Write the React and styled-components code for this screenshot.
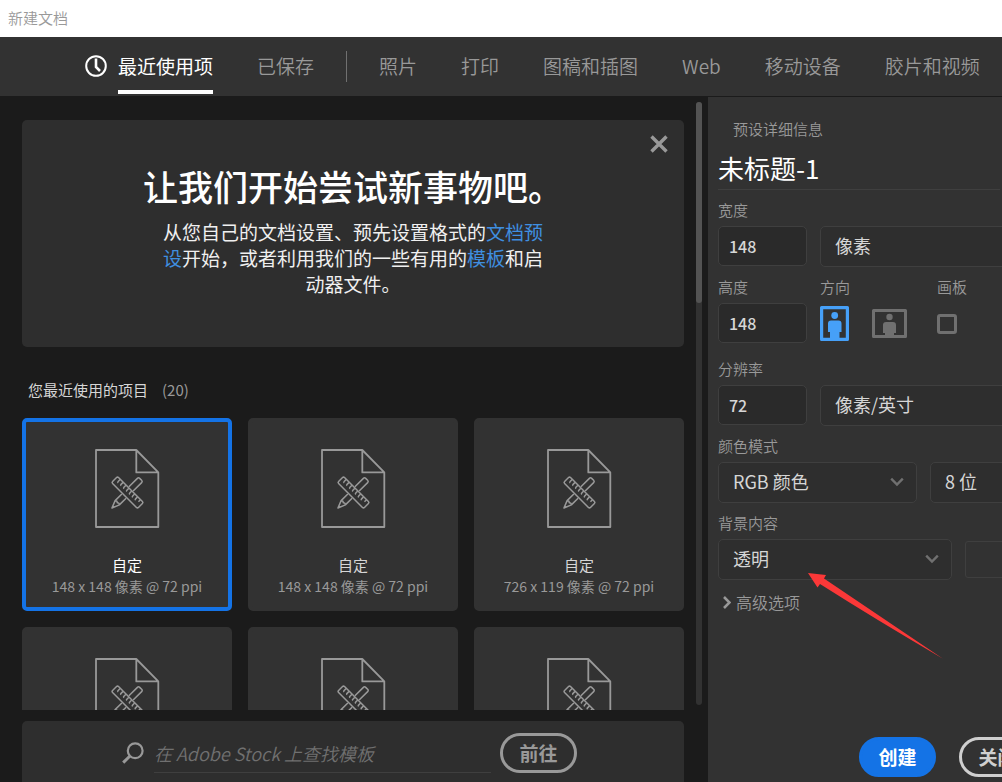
import React, { useState } from 'react'
import styled, { createGlobalStyle, css, ThemeProvider } from 'styled-components'

const theme = {
  dark: '#1b1b1b',
  panel: '#323232',
  inset: '#2e2e2e',
  field: '#2a2a2a',
  line: '#3f3f3f',
  muted: '#999999',
  dim: '#707070',
  text: '#d6d6d6',
  blue: '#1473e6',
  link: '#3f8fe0',
  radius: '5px'
}

const GlobalStyle = createGlobalStyle`
  *, *::before, *::after {
    box-sizing: border-box;
  }
  body {
    margin: 0;
    font-family: 'Noto Sans CJK SC', 'Noto Sans', sans-serif;
    font-size: 15px;
    background: ${theme.dark};
  }
  button, input, select {
    margin: 0;
    padding: 0;
    border: 0;
    background: none;
    color: inherit;
    font: inherit;
    outline: none;
  }
  svg {
    display: block;
    flex: none;
  }
`

const Dialog = styled.div`
  display: flex;
  flex-direction: column;
  height: 100vh;
  overflow: hidden;
  background: ${props => props.theme.dark};
  color: ${props => props.theme.text};
`

const TitleBar = styled.header`
  flex: none;
  padding: 0 8px;
  line-height: 35px;
  border-bottom: 2px solid #fff;
  background: #fff;
  color: ${props => props.theme.muted};
  font-weight: 350;
`

const Tabs = styled.nav`
  display: flex;
  flex: none;
  align-items: center;
  gap: 44px;
  height: 60px;
  padding: 0 0 2px 85px;
  background: ${props => props.theme.panel};
  border-bottom: 1px solid ${props => props.theme.dark};
  overflow: hidden;
`

const Tab = styled.button`
  display: flex;
  flex: none;
  align-items: center;
  gap: 11px;
  height: 57px;
  font-size: 19px;
  font-weight: ${props => (props.$active ? 400 : 350)};
  white-space: nowrap;
  color: ${props => (props.$active ? '#fff' : props.theme.muted)};
  span {
    line-height: 49px;
    border-top: 4px solid transparent;
    border-bottom: 4px solid ${props => (props.$active ? '#fff' : 'transparent')};
  }
`

const Divider = styled.i`
  flex: none;
  width: 1px;
  height: 31px;
  margin: 2px -12px 0;
  background: ${props => props.theme.dim};
`

const Body = styled.div`
  display: flex;
  flex: 1;
  min-height: 0;
`

const Main = styled.main`
  display: flex;
  flex: 1;
  flex-direction: column;
  min-width: 0;
  padding: 0 6px 0 22px;
`

const ScrollArea = styled.div`
  display: flex;
  flex: 1;
  gap: 12px;
  min-height: 0;
`

const ScrollContent = styled.div`
  flex: 1;
  min-width: 0;
  padding-top: 23px;
  overflow: hidden;
`

const ScrollTrack = styled.div`
  width: 6px;
  margin: 5px 0;
  border-radius: 3px;
  background: ${props => props.theme.panel};
`

const ScrollThumb = styled.div`
  height: 201px;
  border-radius: 3px;
  background: #535353;
`

const Hero = styled.section`
  position: relative;
  min-height: 227px;
  padding-top: 41px;
  border-radius: ${props => props.theme.radius};
  background: ${props => props.theme.inset};
  text-align: center;
  h1 {
    margin: 0 0 8px;
    font-size: 35px;
    font-weight: 500;
    line-height: 50px;
    color: #fff;
  }
  p {
    width: 390px;
    margin: 0 auto;
    font-size: 19px;
    line-height: 26px;
    color: #f0f0f0;
  }
  a {
    color: ${props => props.theme.link};
    text-decoration: none;
  }
`

const CloseButton = styled.button`
  position: absolute;
  top: 15px;
  right: 16px;
  color: ${props => props.theme.muted};
`

const SectionTitle = styled.h2`
  margin: 31px 0 16px 6px;
  font-size: 15px;
  font-weight: 400;
  line-height: 24px;
  span {
    margin-left: 14px;
    color: ${props => props.theme.muted};
  }
`

const Grid = styled.div`
  display: grid;
  grid-template-columns: repeat(3, 1fr);
  gap: 16px;
`

const Card = styled.button`
  display: flex;
  flex-direction: column;
  align-items: center;
  height: 193px;
  padding-top: 26px;
  border: 4px solid ${props => (props.$selected ? props.theme.blue : props.theme.panel)};
  border-radius: ${props => props.theme.radius};
  background: ${props => props.theme.panel};
  line-height: 22px;
  svg {
    margin-bottom: 26px;
  }
  strong {
    font-weight: 400;
    color: ${props => (props.$selected ? '#fff' : props.theme.text)};
  }
  small {
    font-size: 14px;
    line-height: 20px;
    color: ${props => props.theme.muted};
  }
`

const SearchBar = styled.form`
  display: flex;
  flex: none;
  align-items: flex-start;
  height: 61px;
  margin: 11px 18px 0 0;
  padding: 12px 107px 0 100px;
  border-radius: 5px 5px 0 0;
  background: ${props => props.theme.inset};
  svg {
    margin: 9px 10px 0 0;
    color: ${props => props.theme.muted};
  }
`

const SearchInput = styled.input`
  flex: 1;
  min-width: 0;
  height: 40px;
  margin-right: 9px;
  border-bottom: 1px solid ${props => props.theme.line};
  font-size: 18px;
  &::placeholder {
    color: ${props => props.theme.dim};
    font-style: italic;
    font-weight: 350;
    opacity: 1;
  }
`

const PillButton = styled.button`
  flex: none;
  width: 77px;
  height: 40px;
  border: 3px solid ${props => props.theme.muted};
  border-radius: 20px;
  font-size: 19px;
  font-weight: 700;
  line-height: 32px;
  color: ${props => props.theme.muted};
  ${props =>
    props.$primary &&
    css`
      border-color: ${props.theme.blue};
      background: ${props.theme.blue};
      color: #fff;
    `}
  ${props =>
    props.$light &&
    css`
      border-color: #cfcfcf;
      color: #cfcfcf;
    `}
`

const Details = styled.aside`
  position: relative;
  display: flex;
  flex: none;
  flex-direction: column;
  gap: 10px;
  width: 294px;
  padding: 21px 2px 5px 10px;
  background: ${props => props.theme.panel};
`

const DetailsTitle = styled.h2`
  margin: 0 15px;
  font-size: 15px;
  font-weight: 350;
  line-height: 22px;
  color: ${props => props.theme.muted};
`

const NameInput = styled.input`
  flex: none;
  width: 100%;
  height: 40px;
  padding-bottom: 4px;
  border-bottom: 1px solid ${props => props.theme.line};
  font-size: 26px;
  color: #fff;
`

const Row = styled.div`
  display: flex;
  flex: none;
  align-items: flex-end;
  gap: 13px;
  margin-bottom: ${props => (props.$spaced ? '5px' : 0)};
`

const Field = styled.div`
  display: flex;
  flex: none;
  flex-direction: column;
  gap: 4px;
  width: ${props => props.$width};
`

const labelStyles = css`
  font-weight: 350;
  line-height: 20px;
  padding-bottom: 2px;
  color: ${props => props.theme.muted};
  white-space: nowrap;
`

const Label = styled.label`
  ${labelStyles}
`

const Legend = styled.span`
  ${labelStyles}
`

const NumberInput = styled.input`
  width: 100%;
  height: 40px;
  margin-bottom: 1px;
  padding: 0 10px;
  border: 1px solid ${props => props.theme.line};
  border-radius: ${props => props.theme.radius};
  background: ${props => props.theme.field};
  font-size: 16px;
  font-weight: 500;
`

const SelectBox = styled.div`
  position: relative;
  flex: none;
  width: ${props => props.$width};
  svg {
    position: absolute;
    top: 15px;
    right: 13px;
    color: ${props => props.theme.dim};
    pointer-events: none;
  }
`

const SelectInput = styled.select`
  display: block;
  width: 100%;
  height: 41px;
  padding: 0 14px 4px;
  appearance: none;
  border: 1px solid ${props => props.theme.line};
  border-radius: ${props => props.theme.radius};
  background: ${props => props.theme.inset};
  font-size: 18px;
`

const Controls = styled.div`
  display: flex;
  align-items: center;
  gap: 23px;
  height: 41px;
`

const OrientationButton = styled.button`
  color: ${props => (props.$active ? '#46a0f8' : props.theme.dim)};
`

const Checkbox = styled.input`
  width: 20px;
  height: 20px;
  appearance: none;
  border: 3px solid ${props => props.theme.dim};
  border-radius: 3px;
  &:checked {
    background: ${props => props.theme.dim};
  }
`

const Swatch = styled.button`
  flex: none;
  width: 60px;
  height: 37px;
  margin-bottom: 2px;
  border: 1px solid ${props => props.theme.line};
  border-radius: 3px;
`

const Advanced = styled.button`
  display: flex;
  flex: none;
  align-items: center;
  align-self: flex-start;
  gap: 5px;
  padding-left: 5px;
  font-size: 16px;
  font-weight: 350;
  line-height: 24px;
  color: ${props => props.theme.muted};
`

const Actions = styled.div`
  display: flex;
  gap: 23px;
  margin-top: auto;
  padding-left: 141px;
`

const Arrow = styled.svg`
  position: absolute;
  top: 475px;
  left: 99px;
  pointer-events: none;
`

const ClockIcon = () => (
  <svg width="22" height="22" viewBox="0 0 22 22" fill="none" stroke="currentColor" strokeWidth="2">
    <circle cx="11" cy="11" r="9.8" />
    <path d="M11 3.5V12l4 4" strokeWidth="2.6" />
  </svg>
)

const CloseIcon = () => (
  <svg width="18" height="18" viewBox="0 0 18 18" fill="none" stroke="currentColor" strokeWidth="3.4">
    <path d="M1.5 1.5l15 15M16.5 1.5l-15 15" />
  </svg>
)

const SearchIcon = () => (
  <svg width="22" height="22" viewBox="0 0 22 22" fill="none" stroke="currentColor">
    <circle cx="13.2" cy="8.8" r="7.4" strokeWidth="2.2" />
    <path d="M8 14L1.2 20.6" strokeWidth="3" />
  </svg>
)

const ChevronDown = () => (
  <svg width="14" height="10" viewBox="0 0 14 10" fill="none" stroke="currentColor" strokeWidth="2.4">
    <path d="M1.2 1.6L7 7.6l5.8-6" />
  </svg>
)

const ChevronRight = () => (
  <svg width="8" height="13" viewBox="0 0 8 13" fill="none" stroke="currentColor" strokeWidth="2.6">
    <path d="M1 1l5.500 5.500L1 12" />
  </svg>
)

const DocumentIcon = () => (
  <svg width="66" height="80" viewBox="0 0 66 80" fill="none" stroke="#999" strokeWidth="1.8" strokeLinejoin="round">
    <path d="M42.3 2H2v77h62.3V24.4zM42.3 2v22.4h22" />
    {/* pencil */}
    <g transform="translate(33.5 44.5) rotate(-45)" strokeWidth="1.5">
      <path d="M5-3h12q1.600 0 1.600 1.600v2.800q0 1.600-1.600 1.600H5M-5-3h-9.500L-22 0l7.500 3H-5M-14.500-3q1.600 1.500 0 3 1.600 1.500 0 3M-20-.6v1.200" />
    </g>
    {/* ruler */}
    <g transform="translate(33.5 44.5) rotate(45)" strokeWidth="1.5">
      <rect x="-18.3" y="-4.2" width="36.6" height="8.400" rx="1.400" />
      <path d="M-14.400-4v2.800q0 1 1 1M-10.300-4v2.800q0 1 1 1M-6.200-4v2.800q0 1 1 1M-2.100-4v2.800q0 1 1 1M2-4v2.800q0 1 1 1M6.100-4v2.800q0 1 1 1M10.200-4v2.800q0 1 1 1M14.300-4v2.800" />
    </g>
  </svg>
)

const PortraitIcon = () => (
  <svg width="29" height="35" viewBox="0 0 29 35" fill="currentColor">
    <path fillRule="evenodd" d="M1.5 0h26A1.5 1.5 0 0129 1.5v32a1.5 1.5 0 01-1.5 1.5h-26A1.5 1.5 0 010 33.5v-32A1.5 1.5 0 011.5 0zM3.2 3.2v28.500H10v-5.700H8v-8.500q0-3 3-3h7.500q3 0 3 3V26h-2v5.700h6.300V3.200z" />
    <circle cx="14.7" cy="9.5" r="3.4" />
  </svg>
)

const LandscapeIcon = () => (
  <svg width="35" height="29" viewBox="0 0 35 29" fill="currentColor">
    <path fillRule="evenodd" d="M1.5 0h32A1.5 1.5 0 0135 1.5v26a1.5 1.5 0 01-1.5 1.5h-32A1.5 1.5 0 010 27.5v-26A1.5 1.5 0 011.5 0zM3 3v23h10v-2h-2v-8q0-3 3-3h7q3 0 3 3v8h-2v2h10V3z" />
    <circle cx="17.5" cy="8" r="3.2" />
  </svg>
)

const Select = ({ id, label, width, options }) => (
  <SelectBox $width={width}>
    <SelectInput id={id} aria-label={label}>
      {options.map(option => (
        <option key={option}>{option}</option>
      ))}
    </SelectInput>
    <ChevronDown />
  </SelectBox>
)

const savedTabs = ['最近使用项', '已保存']
const presetTabs = ['照片', '打印', '图稿和插图', 'Web', '移动设备', '胶片和视频']

const recentItems = [
  '148 x 148 像素 @ 72 ppi',
  '148 x 148 像素 @ 72 ppi',
  '726 x 119 像素 @ 72 ppi',
  '148 x 148 像素 @ 72 ppi',
  '148 x 148 像素 @ 72 ppi',
  '148 x 148 像素 @ 72 ppi'
]

const App = () => {
  const [tab, setTab] = useState('最近使用项')
  const [selected, setSelected] = useState(0)
  const [portrait, setPortrait] = useState(true)

  const renderTab = name => (
    <Tab key={name} type="button" $active={tab === name} onClick={() => setTab(name)}>
      {name === '最近使用项' && <ClockIcon />}
      <span>{name}</span>
    </Tab>
  )

  return (
    <ThemeProvider theme={theme}>
      <GlobalStyle />
      <Dialog>
        <TitleBar>新建文档</TitleBar>
        <Tabs>
          {savedTabs.map(renderTab)}
          <Divider />
          {presetTabs.map(renderTab)}
        </Tabs>
        <Body>
          <Main>
            <ScrollArea>
              <ScrollContent>
                <Hero>
                  <CloseButton type="button" aria-label="关闭">
                    <CloseIcon />
                  </CloseButton>
                  <h1>让我们开始尝试新事物吧。</h1>
                  <p>
                    从您自己的文档设置、预先设置格式的<a href="#presets">文档预设</a>开始，或者利用我们的一些有用的<a href="#templates">模板</a>和启动器文件。
                  </p>
                </Hero>
                <SectionTitle>
                  您最近使用的项目<span>(20)</span>
                </SectionTitle>
                <Grid>
                  {recentItems.map((size, i) => (
                    <Card key={i} type="button" $selected={selected === i} onClick={() => setSelected(i)}>
                      <DocumentIcon />
                      <strong>自定</strong>
                      <small>{size}</small>
                    </Card>
                  ))}
                </Grid>
              </ScrollContent>
              <ScrollTrack>
                <ScrollThumb />
              </ScrollTrack>
            </ScrollArea>
            <SearchBar onSubmit={e => e.preventDefault()}>
              <SearchIcon />
              <SearchInput placeholder="在 Adobe Stock 上查找模板" aria-label="在 Adobe Stock 上查找模板" />
              <PillButton type="submit">前往</PillButton>
            </SearchBar>
          </Main>
          <Details>
            <DetailsTitle>预设详细信息</DetailsTitle>
            <NameInput defaultValue="未标题-1" aria-label="预设详细信息" />
            <Row>
              <Field $width="89px">
                <Label htmlFor="width">宽度</Label>
                <NumberInput id="width" defaultValue="148" />
              </Field>
              <Select label="宽度" width="240px" options={['像素', '英寸', '厘米']} />
            </Row>
            <Row $spaced>
              <Field $width="89px">
                <Label htmlFor="height">高度</Label>
                <NumberInput id="height" defaultValue="148" />
              </Field>
              <Field $width="104px">
                <Legend>方向</Legend>
                <Controls>
                  <OrientationButton type="button" aria-label="纵向" $active={portrait} onClick={() => setPortrait(true)}>
                    <PortraitIcon />
                  </OrientationButton>
                  <OrientationButton type="button" aria-label="横向" $active={!portrait} onClick={() => setPortrait(false)}>
                    <LandscapeIcon />
                  </OrientationButton>
                </Controls>
              </Field>
              <Field $width="40px">
                <Label htmlFor="artboard">画板</Label>
                <Controls>
                  <Checkbox id="artboard" type="checkbox" />
                </Controls>
              </Field>
            </Row>
            <Row>
              <Field $width="89px">
                <Label htmlFor="resolution">分辨率</Label>
                <NumberInput id="resolution" defaultValue="72" />
              </Field>
              <Select label="分辨率" width="240px" options={['像素/英寸', '像素/厘米']} />
            </Row>
            <Row>
              <Field $width="199px">
                <Label htmlFor="mode">颜色模式</Label>
                <Select id="mode" width="100%" options={['RGB 颜色', 'CMYK 颜色', '灰度']} />
              </Field>
              <Select label="颜色模式" width="130px" options={['8 位', '16 位', '32 位']} />
            </Row>
            <Row>
              <Field $width="234px">
                <Label htmlFor="background">背景内容</Label>
                <Select id="background" width="100%" options={['透明', '白色', '黑色']} />
              </Field>
              <Swatch type="button" aria-label="背景内容" />
            </Row>
            <Advanced type="button">
              <ChevronRight />
              高级选项
            </Advanced>
            <Actions>
              <PillButton type="button" $primary>创建</PillButton>
              <PillButton type="button" $light>关闭</PillButton>
            </Actions>
            <Arrow width="138" height="90" viewBox="0 0 138 90" fill="#fb3838">
              <path d="M1 1l18 2-2 3.5L136 86.700Q68 47 13 12l-2.500 3.500z" />
            </Arrow>
          </Details>
        </Body>
      </Dialog>
    </ThemeProvider>
  )
}

export default App
